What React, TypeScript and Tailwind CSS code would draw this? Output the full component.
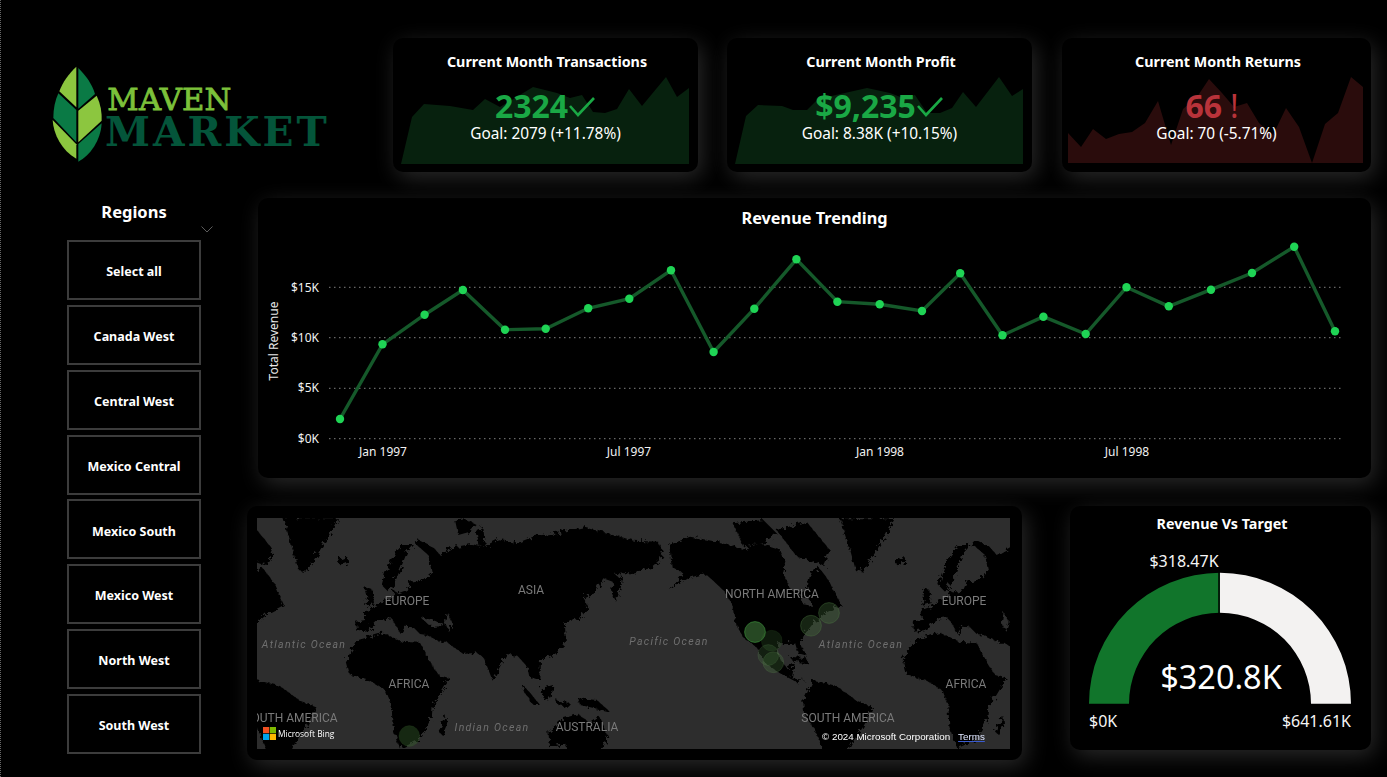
import React from "react";

const font = { fontFamily: '"Noto Sans", "Open Sans", sans-serif' };

const regions = ["Select all", "Canada West", "Central West", "Mexico Central", "Mexico South", "Mexico West", "North West", "South West"];

const trend: [number, number][] = [
  [340, 419], [382.5, 344.3], [424.6, 314.7], [462.9, 290], [505, 329.7], [545.7, 328.7], [588.2, 308.3], [629.3, 298.7], [671, 270.3], [713.6, 352], [754.3, 308.7], [796.4, 259.3], [837.4, 301.7], [879.7, 304.3], [922, 311], [960.2, 273.3], [1002.5, 335.3], [1043.4, 316.7], [1085.7, 334], [1126.5, 287.3], [1168.8, 306.3], [1211, 289.7], [1252, 273], [1294.2, 246.7], [1335, 331.3],
];

function Logo() {
  return (
    <svg width="280" height="100" viewBox="150 100 840 300" className="mt-[17px] shrink-0">
      <path d="M229 108 C205 130 188 155 178 182 L229 230 Z" fill="#8cc63f" />
      <path d="M235 112 C258 135 276 160 285 190 L235 234 Z" fill="#0a7a45" />
      <path d="M175 188 C165 210 160 235 160 262 L229 335 L229 238 Z" fill="#0a7a45" />
      <path d="M290 195 C302 220 306 245 305 270 L235 335 L235 240 Z" fill="#8cc63f" />
      <path d="M158 268 C160 310 185 360 229 384 L229 341 Z" fill="#8cc63f" />
      <path d="M305 278 C302 330 270 375 235 393 L235 340 Z" fill="#0a7a45" />
      <text x="322" y="238" textLength="372" lengthAdjust="spacing" fontSize="92" fontWeight="400" fill="#7cc13a" stroke="#7cc13a" strokeWidth="2.5" style={{ fontFamily: '"DejaVu Serif", serif' }}>MAVEN</text>
      <text x="315" y="345" textLength="665" lengthAdjust="spacing" fontSize="122" fontWeight="700" fill="#04553a" style={{ fontFamily: '"DejaVu Serif", serif' }}>MARKET</text>
    </svg>
  );
}

function Kpi({ title, value, goal, points, fill, color, mark, widthClass, viewBox }: { title: string; value: string; goal: string; points: string; fill: string; color: string; mark: "check" | "bang"; widthClass: string; viewBox: string }) {
  return (
    <div className={`relative h-[134px] shrink-0 overflow-hidden rounded-[10px] bg-black shadow-[4px_6px_22px_rgba(255,255,255,0.16)] ${widthClass}`}>
      <svg className="absolute inset-0 h-full w-full" viewBox={viewBox}>
        <polygon points={points} fill={fill} />
      </svg>
      <div className="relative flex flex-col items-center pt-[13px] text-white">
        <div className="pl-[3px] text-[14.3px] font-bold leading-[22px]">{title}</div>
        <div className="mt-[11px] flex h-[44px] items-center text-[32px] font-bold leading-[44px]" style={{ color }}>
          <span>{value}</span>
          {mark === "check" ? (
            <svg width="28" height="22" viewBox="0 0 28 22" className="mt-[2px]">
              <polyline points="2,10 10,19 26,2" fill="none" stroke={color} strokeWidth="2.6" />
            </svg>
          ) : (
            <span className="ml-[8px] mr-[9px] font-normal">!</span>
          )}
        </div>
        <div className="mt-[-5px] text-[15.4px] leading-[22px]">{goal}</div>
      </div>
    </div>
  );
}

function Trend() {
  return (
    <svg width="1113" height="240" viewBox="258 238 1113 240" className="block">
      {[287.3, 337.7, 388.3, 438.7].map((y) => (
        <line key={y} x1="329" x2="1342" y1={y} y2={y} stroke="#808080" strokeWidth="1" strokeDasharray="1.5 3.5" />
      ))}
      {[["$15K", 292], ["$10K", 342], ["$5K", 392], ["$0K", 443]].map(([t, y]) => (
        <text key={t} x="319" y={y} textAnchor="end" fontSize="12" fill="#f2f2f2">{t}</text>
      ))}
      {[["Jan 1997", 383], ["Jul 1997", 629], ["Jan 1998", 880], ["Jul 1998", 1127]].map(([t, x]) => (
        <text key={t} x={x} y="456" textAnchor="middle" fontSize="12" fill="#f2f2f2">{t}</text>
      ))}
      <text transform="translate(278 341) rotate(-90)" textAnchor="middle" fontSize="12" fill="#e8e8e8">Total Revenue</text>
      <polyline points={trend.map((p) => p.join(",")).join(" ")} fill="none" stroke="#15592a" strokeWidth="3.4" />
      {trend.map(([x, y]) => (
        <circle key={x} cx={x} cy={y} r="4.2" fill="#1fd455" />
      ))}
    </svg>
  );
}

const eurasia = `M322 365 L318 335 L345 330 L345 300 L372 290 L400 270 L430 262 L428 240 L445 250 L470 240 L480 215 L520 208 L545 185 L535 135 L500 105 L455 105 L425 145 L405 190 L395 225 L415 245 L440 205 L470 130 L505 90 L550 112 L570 135 L610 112 L665 102 L700 110 L745 88 L800 100 L855 78 L925 68 L1000 52 L1085 72 L1150 92 L1225 95 L1240 125 L1175 150 L1125 178 L1095 192 L1118 215 L1100 270 L1088 215 L1060 205 L1035 250 L1000 262 L1015 290 L985 335 L970 320 L945 345 L948 400 L915 432 L870 450 L868 510 L838 500 L832 470 L805 440 L770 432 L728 512 L702 445 L680 428 L640 432 L590 395 L570 395 L530 375 L510 372 L490 352 L465 350 L452 372 L425 325 L385 330 L355 360 Z`;
const africa = `M288 450 L325 390 L400 368 L455 395 L510 398 L540 455 L565 495 L600 505 L548 590 L545 625 L505 690 L450 716 L428 650 L425 590 L405 540 L360 512 L300 495 Z`;
const americas = `M118 105 L180 80 L285 100 L340 118 L390 100 L450 118 L468 165 L462 195 L485 240 L530 245 L540 195 L565 170 L600 215 L632 285 L585 310 L550 340 L522 375 L512 400 L527 438 L505 432 L495 398 L445 400 L440 430 L470 475 L495 458 L485 505 L525 510 L495 514 L450 490 L405 458 L380 412 L345 388 L320 350 L312 300 L285 245 L225 190 L175 205 L120 240 L160 190 L125 170 Z`;
const south = `M520 572 L550 510 L620 528 L680 572 L730 590 L700 650 L665 700 L640 750 L590 750 L555 660 L522 610 Z`;

function EurasiaLand() {
  return (
    <g>
      <path d={eurasia} />
      <path d={africa} />
      <path d="M345 232 L368 240 L372 280 L345 288 L352 260 Z" />
      <path d="M825 530 L870 585 L850 585 L815 535 Z" />
      <path d="M872 535 L910 525 L905 565 L880 570 Z" />
      <path d="M985 565 L1040 570 L1080 605 L1035 595 L990 585 Z" />
      <path d="M915 570 L960 580 L950 590 L925 585 Z" />
      <path d="M895 665 L940 625 L985 612 L1020 640 L1050 620 L1075 680 L1050 730 L960 735 L945 700 L900 715 Z" />
      <path d="M565 665 L590 618 L592 640 L578 675 Z" />
      <path d="M1090 225 L1118 185 L1110 240 L1095 272 L1086 250 Z" />
      <path d="M262 155 L290 140 L297 152 L275 167 Z" />
      <path d="M615 30 L640 25 L680 45 L660 65 L625 75 Z" />
      <path d="M680 60 L700 50 L705 110 L685 105 Z" />
    </g>
  );
}

function AmericasLand() {
  return (
    <g>
      <path d={americas} />
      <path d={south} />
      <path d="M630 25 L795 25 L765 80 L700 185 L675 180 L650 90 Z" />
      <path d="M310 40 L400 30 L440 70 L400 100 L340 110 Z" />
      <path d="M440 60 L530 35 L600 120 L580 165 L500 140 Z" />
      <path d="M800 148 L825 142 L825 158 L800 166 Z" />
      <path d="M480 440 L530 445 L535 460 L490 455 Z" />
      <path d="M-60 90 L60 100 L100 140 L60 175 L0 190 L-60 190 Z" />
    </g>
  );
}

function Bubble({ cx, cy, fill, stroke }: { cx: number; cy: number; fill: string; stroke: string }) {
  return <circle cx={cx} cy={cy} r="10.4" fill={fill} stroke={stroke} strokeWidth="1" />;
}

function WorldMap() {
  const big = { fontSize: 12, fill: "#7a7a7a", fontFamily: "Roboto, sans-serif", textAnchor: "middle" as const };
  const sea = { fontSize: 10.5, fill: "#6f6f6f", fontFamily: "Roboto, sans-serif", fontStyle: "italic", letterSpacing: 1.3, textAnchor: "middle" as const };
  return (
    <div className="relative h-[231px] w-[753px] overflow-hidden bg-[#2d2d2d]">
      <svg width="753" height="231" viewBox="257 518 753 231" className="block">
        <defs>
          <filter id="rough" x="-5%" y="-5%" width="110%" height="110%">
            <feTurbulence type="fractalNoise" baseFrequency="0.24" numOctaves="4" seed="4" />
            <feDisplacementMap in="SourceGraphic" scale="8" />
          </filter>
        </defs>
        <g fill="#000" filter="url(#rough)">
          <g transform="translate(250 510) scale(0.3333)"><EurasiaLand /></g>
          <g transform="translate(806.7 510) scale(0.3333)"><EurasiaLand /></g>
          <g transform="translate(630 510) scale(0.3333)"><AmericasLand /></g>
          <g transform="translate(73.3 510) scale(0.3333)"><AmericasLand /></g>
          <g fill="#2d2d2d">
            <path d="M420 617 L433 620 L445 625 L430 626 Z" />
            <path d="M447 612 L452 622 L449 632 L445 622 Z" />
            <path d="M447 612 L452 622 L449 632 L445 622 Z" transform="translate(556.7 0)" />
            <path d="M800 596 L810 598 L812 606 L802 604 Z" />
          </g>
        </g>
        <Bubble cx={755} cy={632} fill="rgba(64,120,58,0.6)" stroke="rgba(60,150,60,0.6)" />
        <Bubble cx={771.7} cy={640.7} fill="rgba(60,110,50,0.24)" stroke="rgba(60,110,50,0.15)" />
        <Bubble cx={768.3} cy={655} fill="rgba(80,130,70,0.24)" stroke="rgba(90,130,80,0.2)" />
        <Bubble cx={773.3} cy={662.3} fill="rgba(80,130,70,0.28)" stroke="rgba(90,130,80,0.25)" />
        <Bubble cx={811} cy={625.7} fill="rgba(80,130,70,0.28)" stroke="rgba(80,130,70,0.35)" />
        <Bubble cx={829} cy={613} fill="rgba(80,130,70,0.28)" stroke="rgba(80,130,70,0.35)" />
        <Bubble cx={409.3} cy={736} fill="rgba(60,110,50,0.36)" stroke="rgba(60,110,50,0.15)" />
        <text x="407" y="605" {...big}>EUROPE</text>
        <text x="964" y="605" {...big}>EUROPE</text>
        <text x="531" y="594" {...big}>ASIA</text>
        <text x="409" y="688" {...big}>AFRICA</text>
        <text x="966" y="688" {...big}>AFRICA</text>
        <text x="848" y="722" {...big}>SOUTH AMERICA</text>
        <text x="291" y="722" {...big}>SOUTH AMERICA</text>
        <text x="772" y="598" {...big}>NORTH AMERICA</text>
        <text x="587" y="731" {...big}>AUSTRALIA</text>
        <text x="304" y="648" {...sea}>Atlantic Ocean</text>
        <text x="861" y="648" {...sea}>Atlantic Ocean</text>
        <text x="669" y="645" {...sea}>Pacific Ocean</text>
        <text x="492" y="731" {...sea}>Indian Ocean</text>
      </svg>
      <div className="absolute left-[6px] top-[209px] flex items-center gap-[1px] text-[8.4px] leading-[12px] text-white">
        <svg width="13" height="13" viewBox="0 0 12 12" className="mr-[1px]">
          <rect x="0" y="0" width="5.7" height="5.7" fill="#f25022" />
          <rect x="6.3" y="0" width="5.7" height="5.7" fill="#7fba00" />
          <rect x="0" y="6.3" width="5.7" height="5.7" fill="#00a4ef" />
          <rect x="6.3" y="6.3" width="5.7" height="5.7" fill="#ffb900" />
        </svg>
        <span style={{ fontFamily: '"Open Sans", sans-serif' }}>Microsoft Bing</span>
      </div>
      <div className="absolute left-[565px] top-[213px] flex gap-[8px] text-[9.8px] leading-[12px] text-white" style={{ fontFamily: '"Liberation Sans", sans-serif' }}>
        <span>© 2024 Microsoft Corporation</span>
        <span className="text-[#dfe6ff] underline decoration-[#3a5bd0]">Terms</span>
      </div>
    </div>
  );
}

function Gauge() {
  return (
    <svg width="301" height="208" viewBox="1070 542 301 208" className="block">
      <path d="M1089 703.7 A131 131 0 0 1 1220 572.7 L1220 612.7 A91 91 0 0 0 1129 703.7 Z" fill="#11752b" />
      <path d="M1220 572.7 A131 131 0 0 1 1351 703.7 L1311 703.7 A91 91 0 0 0 1220 612.7 Z" fill="#f3f2f1" />
      <line x1="1219" y1="572" x2="1219" y2="613" stroke="#000" strokeWidth="1.5" />
      <text x="1184" y="567" textAnchor="middle" fontSize="16" fill="#f5f5f5">$318.47K</text>
      <text x="1089" y="727" fontSize="16" fill="#f5f5f5">$0K</text>
      <text x="1351" y="727" textAnchor="end" fontSize="16" fill="#f5f5f5">$641.61K</text>
      <text x="1221" y="689" textAnchor="middle" fontSize="32.4" fill="#ffffff">$320.8K</text>
    </svg>
  );
}

export default function App() {
  return (
    <div className="h-[777px] w-[1387px] overflow-hidden border-l border-dotted border-[#666] bg-black text-white" style={font}>
      <div className="flex pt-[38px]">
        <div className="flex w-[392px] shrink-0 items-center pl-[49px]">
          <Logo />
        </div>
        <Kpi
          title="Current Month Transactions"
          value="2324"
          goal="Goal: 2079 (+11.78%)"
          color="#1aa845"
          fill="#07210e"
          mark="check"
          widthClass="w-[305px]"
          viewBox="393 38 305 134"
          points="401,164 412,117 424,104 450,106 473,110 485,99 500,107 533,87 557,93 570,98 582,95 593,112 605,113 617,109 629,89 642,106 666,77 677,97 689,88 689,164"
        />
        <div className="w-[29px] shrink-0" />
        <Kpi
          title="Current Month Profit"
          value="$9,235"
          goal="Goal: 8.38K (+10.15%)"
          color="#1aa845"
          fill="#07210e"
          mark="check"
          widthClass="w-[305px]"
          viewBox="727 38 305 134"
          points="735,164 746,116 758,105 782,106 793,110 807,110 818,99 867,88 890,93 903,98 915,95 927,113 940,113 952,108 963,92 976,107 999,77 1012,96 1023,89 1023,164"
        />
        <div className="w-[30px] shrink-0" />
        <Kpi
          title="Current Month Returns"
          value="66"
          goal="Goal: 70 (-5.71%)"
          color="#b8333a"
          fill="#2a0c0c"
          mark="bang"
          widthClass="w-[309px]"
          viewBox="1062 38 309 134"
          points="1068,163 1068,133 1081,147 1093,129 1106,139 1119,134 1132,132 1145,123 1158,101 1171,145 1183,109 1197,97 1209,79 1222,93 1234,107 1247,103 1259,123 1273,135 1286,108 1299,127 1312,163 1325,124 1338,113 1351,77 1363,87 1363,163"
        />
      </div>

      <div className="mt-[26px] flex">
        <div className="w-[246px] shrink-0 pl-[66px]">
          <div className="w-[134px] text-center text-[16.5px] font-bold leading-[28px]">Regions</div>
          <div className="flex h-[14px] w-[146px] justify-end">
            <svg width="12" height="7" viewBox="0 0 12 7">
              <polyline points="0.5,0.5 6,6 11.5,0.5" fill="none" stroke="#5c5c5c" strokeWidth="1" />
            </svg>
          </div>
          <div className="flex flex-col gap-[4.85px]">
            {regions.map((r) => (
              <div key={r} className="flex h-[60px] w-[134px] items-center justify-center border-2 border-[#3c3c3c] pt-[5px] text-[12.5px] font-bold">
                {r}
              </div>
            ))}
          </div>
        </div>

        <div className="flex-1">
          <div className="ml-[11px] h-[280px] w-[1113px] rounded-[10px] bg-black shadow-[4px_6px_22px_rgba(255,255,255,0.16)]">
            <div className="h-[40px] text-center text-[16.3px] font-bold leading-[40px]">Revenue Trending</div>
            <Trend />
          </div>
          <div className="mt-[28px] flex items-start">
            <div className="h-[254px] w-[775px] rounded-[10px] bg-black pl-[10px] pt-[12px] shadow-[4px_6px_22px_rgba(255,255,255,0.16)]">
              <WorldMap />
            </div>
            <div className="ml-[48px] h-[244px] w-[301px] rounded-[10px] bg-black shadow-[4px_6px_22px_rgba(255,255,255,0.16)]">
              <div className="h-[36px] pl-[3px] text-center text-[14.3px] font-bold leading-[36px]">Revenue Vs Target</div>
              <Gauge />
            </div>
          </div>
        </div>
      </div>
    </div>
  );
}
